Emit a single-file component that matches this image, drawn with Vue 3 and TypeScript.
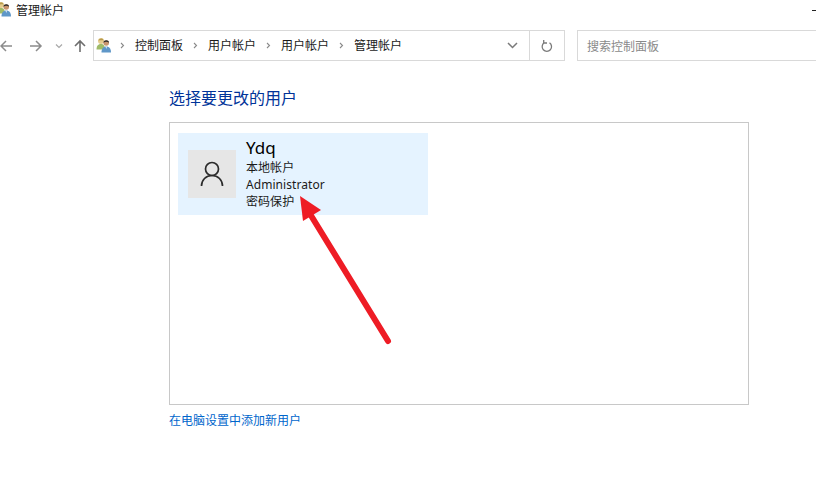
<script setup lang="ts">
const crumbs: string[] = ['控制面板', '用户帐户', '用户帐户', '管理帐户']
const lines: string[] = ['本地帐户', 'Administrator', '密码保护']
</script>

<template>
  <div class="page">
    <svg width="0" height="0" class="defs">
      <symbol id="users" viewBox="0 0 16 16">
        <circle cx="5" cy="4" r="3" fill="#e6cd8e" />
        <path d="M2.500 3.500C3 1 7 .5 7.800 3.500 6 3 4 3.500 2.500 3.500z" fill="#b79a4e" />
        <path d="M0.500 12.500c0-3.800 2-5.500 4.500-5.500s4 1.500 4 5.500z" fill="#9fbb68" />
        <circle cx="10.200" cy="6" r="2.800" fill="#c9956e" />
        <path d="M7.500 5.700C7.500 2.500 13 2.500 13 5.700 11 4.500 9.500 4.500 7.500 5.700z" fill="#2f2d2b" />
        <path d="M5.500 15.500c0-4 2-6 4.800-6s4.700 2 4.700 6z" fill="#5f97c8" />
        <path d="M9.400 9.600h1.800l-.9 2.400z" fill="#dfeaf3" />
      </symbol>
    </svg>
    <header class="titlebar">
      <svg class="title-icon" width="16" height="16"><use href="#users" /></svg>
      <span class="title">管理帐户</span>
      <span class="minimize"></span>
    </header>
    <nav class="toolbar">
      <div class="nav-buttons">
        <svg width="14" height="14" viewBox="0 0 14 14" class="nav-back"><path d="M13 7H2M7 2L2 7l5 5" /></svg>
        <svg width="14" height="14" viewBox="0 0 14 14" class="nav-forward"><path d="M1 7h11M7 2l5 5-5 5" /></svg>
        <svg width="8" height="6" viewBox="0 0 8 6" class="nav-drop"><path d="M1 1.500l3 3 3-3" /></svg>
        <svg width="14" height="14" viewBox="0 0 14 14" class="nav-up"><path d="M7 13V2M2 7l5-5 5 5" /></svg>
      </div>
      <div class="address">
        <svg class="addr-icon" width="16" height="16"><use href="#users" /></svg>
        <template v-for="(c, i) in crumbs" :key="i">
          <svg class="chev" width="5" height="7" viewBox="0 0 5 7"><path d="M1 1l2.500 2.500L1 6" /></svg>
          <span class="crumb">{{ c }}</span>
        </template>
        <svg class="addr-drop" width="11" height="7" viewBox="0 0 11 7"><path d="M1 1l4.500 4.500L10 1" /></svg>
        <div class="refresh">
          <svg width="12" height="14" viewBox="0 0 12 14"><path d="M8.500 3.800a4.700 4.700 0 1 1-5.300 0M2.700 1v3h3.300" /></svg>
        </div>
      </div>
      <div class="search">搜索控制面板</div>
    </nav>
    <main class="content">
      <h1 class="heading">选择要更改的用户</h1>
      <section class="panel">
        <div class="tile">
          <div class="avatar">
            <svg width="24" height="26" viewBox="0 0 24 26"><circle cx="12" cy="8" r="6.500" /><path d="M1.500 25c0-6 4.500-10.500 10.500-10.500S22.500 19 22.500 25" /></svg>
          </div>
          <div class="info">
            <div class="name">Ydq</div>
            <div v-for="l in lines" :key="l" class="line">{{ l }}</div>
          </div>
        </div>
      </section>
      <a class="add-link">在电脑设置中添加新用户</a>
    </main>
    <svg class="arrow" width="816" height="494" viewBox="0 0 816 494">
      <path d="M388 341L307 209" class="shaft" />
      <path d="M300 196l21 14-18 11z" fill="#ee1c25" />
    </svg>
  </div>
</template>

<style scoped>
.page {
  position: relative;
  width: 816px;
  height: 494px;
  overflow: hidden;
  background: #fff;
  font-family: "Noto Sans CJK SC", "Liberation Sans", sans-serif;
  color: #1a1a1a;
}
.defs { position: absolute; }
.titlebar {
  height: 30px;
  display: flex;
  align-items: flex-start;
  padding-top: 1px;
  box-sizing: border-box;
  position: relative;
}
.title-icon { margin-left: -4px; margin-right: 4px; }
.title { font-size: 12px; line-height: 17px; }
.minimize {
  position: absolute;
  right: 0;
  top: 10px;
  width: 4px;
  height: 1px;
  background: #222;
}
.toolbar {
  display: flex;
  height: 31px;
}
.nav-buttons {
  width: 93px;
  flex: none;
  display: flex;
  align-items: center;
  position: relative;
}
.nav-buttons path { fill: none; stroke: #8c8c8c; stroke-width: 1.500; }
.nav-back { margin-left: -1px; }
.nav-forward { margin-left: 16px; }
.nav-drop { margin-left: 12px; }
.nav-drop path { stroke: #a8a8a8; stroke-width: 1.200; }
.nav-up { margin-left: 10px; }
.nav-up path { stroke: #6e6e6e; stroke-width: 1.600; }
.address {
  width: 472px;
  box-sizing: border-box;
  border: 1px solid #d9d9d9;
  display: flex;
  align-items: center;
  padding-left: 2px;
  flex: none;
}
.addr-icon { margin-right: 8px; margin-top: -2px; }
.chev { flex: none; margin-right: 10px; }
.chev path { fill: none; stroke: #8a8a8a; stroke-width: 1.100; }
.crumb { font-size: 12px; line-height: 17px; margin-right: 10px; margin-top: -2px; }
.addr-drop { margin-left: auto; margin-right: 11px; }
.addr-drop path { fill: none; stroke: #7a7a7a; stroke-width: 1.500; }
.refresh {
  width: 34px;
  height: 100%;
  border-left: 1px solid #d9d9d9;
  display: flex;
  align-items: center;
  justify-content: center;
}
.refresh path { fill: none; stroke: #7a7a7a; stroke-width: 1.300; }
.search {
  margin-left: 12px;
  width: 260px;
  flex: none;
  box-sizing: border-box;
  border: 1px solid #d9d9d9;
  padding-left: 9px;
  font-size: 12px;
  line-height: 29px;
  color: #8a8a8a;
}
.content {
  padding: 25px 0 0 169px;
  display: flex;
  flex-direction: column;
  align-items: flex-start;
}
.heading {
  margin: 0;
  font-size: 16px;
  font-weight: 400;
  line-height: 22px;
  color: #003399;
}
.panel {
  margin-top: 14px;
  width: 580px;
  height: 283px;
  box-sizing: border-box;
  border: 1px solid #c8c8c8;
  padding: 10px 8px;
}
.tile {
  width: 250px;
  height: 82px;
  background: #e5f3ff;
  display: flex;
  align-items: center;
  padding-left: 10px;
  box-sizing: border-box;
}
.avatar {
  width: 48px;
  height: 48px;
  background: #e6e6e6;
  display: flex;
  align-items: center;
  justify-content: center;
}
.avatar path, .avatar circle { fill: none; stroke: #2b2b2b; stroke-width: 1.700; }
.info { margin-left: 10px; }
.name {
  font-family: "Noto Sans", "Noto Sans CJK SC", sans-serif;
  font-size: 17px;
  line-height: 19px;
  padding-bottom: 2px;
  color: #000;
}
.line {
  font-family: "Noto Sans", "Noto Sans CJK SC", sans-serif;
  font-size: 12px;
  line-height: 17px;
  letter-spacing: 0.06px;
  color: #1a1a1a;
}
.add-link {
  margin-top: 6px;
  font-size: 12px;
  line-height: 17px;
  color: #0066cc;
}
.arrow { position: absolute; left: 0; top: 0; pointer-events: none; }
.shaft { fill: none; stroke: #ee1c25; stroke-width: 6; stroke-linecap: round; }
</style>
